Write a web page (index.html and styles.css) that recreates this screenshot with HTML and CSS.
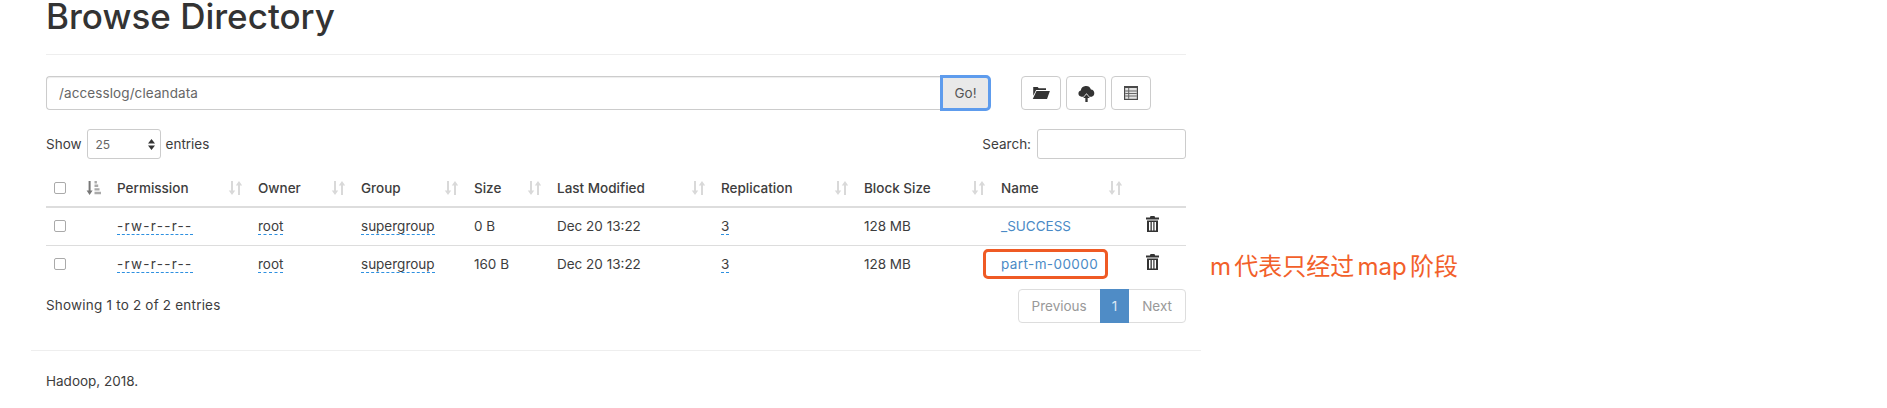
FILE: index.html
```html
<!DOCTYPE html>
<html lang="en">
<head>
  <meta charset="UTF-8">
  <title>Browsing HDFS</title>
  <link rel="stylesheet" href="styles.css">
</head>
<body>
<div class="page">
  <div class="container">
    <div class="page-header">
      <h1>Browse Directory</h1>
    </div>

    <div class="toolbar">
      <div class="path-group">
        <input type="text" class="path-input" value="/accesslog/cleandata">
        <button class="go-btn">Go!</button>
      </div>
      <div class="tool-btns">
        <button class="icon-btn">
          <svg width="20" height="18" viewBox="0 0 18 16"><path fill="#333" d="M2 2.500h4l1 1.200h6.500v1.600H4.600L2 10.500z"/><path fill="#333" d="M4.900 6.200H17l-2.600 7.300H1.600z"/></svg>
        </button>
        <button class="icon-btn">
          <svg width="19" height="19" viewBox="0 0 18 18"><path fill="#333" d="M4.200 12a3 3 0 0 1-.6-5.900 5 5 0 0 1 9.600-.9A3.500 3.500 0 0 1 14 12h-2.200L9 8.800 6.200 12z"/><path fill="#333" d="M9 9.800 5.900 13.200h2V17h2.200v-3.800h2z"/></svg>
        </button>
        <button class="icon-btn">
          <svg width="14" height="16" viewBox="0 0 14 16"><path fill="#4a4a4a" d="M0 1h14v14H0z"/><path fill="#e4e4e4" d="M1.200 3h11.600v10.800H1.200z"/><path fill="#666" d="M4.200 3h1v10.800h-1zM1.200 5.400h11.600v1H1.200zM1.200 8h11.600v1H1.200zM1.200 10.600h11.600v1H1.200z"/></svg>
        </button>
      </div>
    </div>

    <div class="table-top">
      <label class="len-label">Show
        <span class="len-select">
          <select><option>25</option></select>
          <svg class="len-arrows" width="7" height="11" viewBox="0 0 7 11"><path fill="#333" d="M3.500 0 7 4.400H0zM3.500 11 0 6.600h7z"/></svg>
        </span>
        entries</label>
      <label class="search-label">Search: <input type="search" class="search-input"></label>
    </div>

    <table class="files">
      <thead>
        <tr>
          <th class="col-check"><div class="th-in"><input type="checkbox"><svg class="sort-on" width="15" height="14" viewBox="0 0 15 14"><path fill="#777" d="M2.600 0h2v9.600h2L3.600 14 .6 9.600h2z"/><path fill="#aaa" d="M8.500 0h2.400v2.400H8.500zM8.500 3.600h3.700V6H8.500zM8.500 7.200h5V9.600h-5zM8.500 10.800h6.500V13.200H8.500z"/></svg></div></th>
          <th class="col-perm"><div class="th-in">Permission<svg class="sort" width="15" height="14" viewBox="0 0 15 14"><use href="#sort-both"/></svg></div></th>
          <th class="col-owner"><div class="th-in">Owner<svg class="sort" width="15" height="14" viewBox="0 0 15 14"><use href="#sort-both"/></svg></div></th>
          <th class="col-group"><div class="th-in">Group<svg class="sort" width="15" height="14" viewBox="0 0 15 14"><use href="#sort-both"/></svg></div></th>
          <th class="col-size"><div class="th-in">Size<svg class="sort" width="15" height="14" viewBox="0 0 15 14"><use href="#sort-both"/></svg></div></th>
          <th class="col-mod"><div class="th-in">Last Modified<svg class="sort" width="15" height="14" viewBox="0 0 15 14"><use href="#sort-both"/></svg></div></th>
          <th class="col-rep"><div class="th-in">Replication<svg class="sort" width="15" height="14" viewBox="0 0 15 14"><use href="#sort-both"/></svg></div></th>
          <th class="col-block"><div class="th-in">Block Size<svg class="sort" width="15" height="14" viewBox="0 0 15 14"><use href="#sort-both"/></svg></div></th>
          <th class="col-name"><div class="th-in">Name<svg class="sort" width="15" height="14" viewBox="0 0 15 14"><use href="#sort-both"/></svg></div></th>
          <th class="col-del"></th>
        </tr>
      </thead>
      <tbody>
        <tr>
          <td><input type="checkbox"></td>
          <td><span class="editable perm">-rw-r--r--</span></td>
          <td><span class="editable">root</span></td>
          <td><span class="editable">supergroup</span></td>
          <td>0 B</td>
          <td>Dec 20 13:22</td>
          <td><span class="editable">3</span></td>
          <td>128 MB</td>
          <td><a href="#">_SUCCESS</a></td>
          <td class="del"><svg width="15" height="16" viewBox="0 0 15 16"><use href="#trash"/></svg></td>
        </tr>
        <tr>
          <td><input type="checkbox"></td>
          <td><span class="editable perm">-rw-r--r--</span></td>
          <td><span class="editable">root</span></td>
          <td><span class="editable">supergroup</span></td>
          <td>160 B</td>
          <td>Dec 20 13:22</td>
          <td><span class="editable">3</span></td>
          <td>128 MB</td>
          <td><a href="#" class="part">part-m-00000</a></td>
          <td class="del"><svg width="15" height="16" viewBox="0 0 15 16"><use href="#trash"/></svg></td>
        </tr>
      </tbody>
    </table>

    <div class="table-bottom">
      <div class="info">Showing 1 to 2 of 2 entries</div>
      <div class="pager">
        <span class="pg">Previous</span>
        <span class="pg pg-on">1</span>
        <span class="pg">Next</span>
      </div>
    </div>

    <hr class="foot-line">
    <p class="footer">Hadoop, 2018.</p>
  </div>

  <div class="name-box"></div>
  <div class="note">m 代表只经过 map 阶段</div>

  <svg width="0" height="0" class="defs">
    <symbol id="sort-both" viewBox="0 0 15 14"><path fill="#d9d9d9" d="M3 0h2v9.600h2.200L4 14 .8 9.600H3z"/><path fill="#d9d9d9" d="M11 0l3.200 4.400H12V14h-2V4.400H7.800z"/></symbol>
    <symbol id="trash" viewBox="0 0 15 16"><path fill="#333" d="M5.500 0h4l.6 1.500H14V3.500H1V1.500h3.900z"/><path fill="#333" fill-rule="evenodd" d="M2 4.500h11V16H2zM4 6v8.500h1.500V6zM6.800 6v8.500h1.500V6zM9.500 6v8.500H11V6z"/></symbol>
  </svg>
</div>
</body>
</html>
```

FILE: styles.css
```css
body {
  margin: 0;
  font-family: Inter, "Liberation Sans", Arial, sans-serif;
  font-size: 13.5px;
  line-height: 20px;
  color: #3d3d3d;
  background: #fff;
}

.page { position: relative; height: 408px; overflow: hidden; }

.container { width: 1170px; margin-left: 31px; box-sizing: border-box; }

.page-header {
  margin: 0 15px 21px;
  padding-bottom: 21px;
  border-bottom: 1px solid #eee;
}
h1 {
  margin: 0;
  color: #333;
  font-size: 35px;
  font-weight: 500;
  line-height: 33px;
}

.toolbar { display: flex; margin: 0 15px; height: 34px; }

.path-group { display: flex; width: 944px; }
.path-input {
  width: 895px;
  height: 34px;
  box-sizing: border-box;
  padding: 6px 12px;
  border: 1px solid #ccc;
  border-right: none;
  border-radius: 4px 0 0 4px;
  box-shadow: inset 0 1px 1px rgba(0, 0, 0, .075);
  font: inherit;
  letter-spacing: .1px;
  color: #666;
}
.go-btn {
  width: 49px;
  height: 34px;
  border: 1px solid #adadad;
  border-radius: 0 4px 4px 0;
  background: #e9e9e9;
  font: inherit;
  color: #555;
  outline: 3px solid #5e9ced;
  outline-offset: -2px;
}

.tool-btns { display: flex; gap: 5px; margin-left: 31px; }
.icon-btn {
  width: 40px;
  height: 34px;
  padding: 0;
  display: flex;
  align-items: center;
  justify-content: center;
  border: 1px solid #ccc;
  border-radius: 4px;
  background: #fff;
}

.table-top {
  display: flex;
  justify-content: space-between;
  align-items: center;
  margin: 19px 15px 11px;
  height: 30px;
}
.len-label, .search-label { display: flex; align-items: center; gap: 5px; }
.len-select { position: relative; display: block; }
.len-select select {
  display: block;
  width: 74px;
  height: 30px;
  padding: 0 8px;
  border: 1px solid #ccc;
  border-radius: 3px;
  background: #fff;
  appearance: none;
  font: 12px Inter, "Liberation Sans", Arial, sans-serif;
  color: #666;
}
.len-arrows { position: absolute; right: 6px; top: 10px; }
.search-input {
  width: 149px;
  height: 30px;
  box-sizing: border-box;
  border: 1px solid #ccc;
  border-radius: 3px;
  margin-left: 1px;
}

.files {
  width: 1140px;
  margin: 0 15px;
  border-collapse: collapse;
  table-layout: fixed;
}
.files th {
  padding: 8px;
  text-align: left;
  font-weight: 500;
  border-bottom: 2px solid #ddd;
}
.files td {
  padding: 7px 8px 9px;
  border-top: 1px solid #ddd;
}
.files tbody tr:first-child td { border-top: none; }
.files td.del { padding-left: 15px; padding-top: 8px; padding-bottom: 8px; }

.col-check { width: 47px; }
.col-perm { width: 125px; }
.col-owner { width: 87px; }
.col-group { width: 97px; }
.col-size { width: 67px; }
.col-mod { width: 148px; }
.col-rep { width: 127px; }
.col-block { width: 121px; }
.col-name { width: 121px; }

.th-in { display: flex; justify-content: space-between; align-items: center; }
.sort { margin-right: -1px; }
.sort-on { margin-right: 0; }

input[type="checkbox"] {
  appearance: none;
  display: block;
  width: 12px;
  height: 12px;
  margin: 0;
  border: 1px solid #aaa;
  border-radius: 2px;
  background: #fff;
}

.files td a { color: #4a8ac6; text-decoration: none; }
.files td a.part { letter-spacing: .4px; }
.editable { border-bottom: 1px dashed #2e90e0; }
.perm { letter-spacing: 1.3px; }

.table-bottom {
  display: flex;
  justify-content: space-between;
  margin: 6px 15px 0;
}
.info { padding-top: 6px; letter-spacing: .2px; }
.pager {
  display: flex;
  height: 34px;
  border: 1px solid #ddd;
  border-radius: 4px;
  box-sizing: border-box;
}
.pg { padding: 6px 13px; color: #999; line-height: 20px; }
.pg-on { background: #4f8cc6; color: #dbe8f4; margin: -1px 0; padding: 7px 12px; }

.foot-line { margin: 27px 0 20px; border: 0; border-top: 1px solid #eee; }
.footer { margin: 0 15px; }

.name-box {
  position: absolute;
  left: 983px;
  top: 249px;
  width: 125px;
  height: 30px;
  box-sizing: border-box;
  border: 3px solid #ef5a24;
  border-radius: 5px;
}
.note {
  position: absolute;
  left: 1210px;
  top: 252px;
  font-family: Inter, "Noto Sans CJK SC", sans-serif;
  font-size: 24px;
  line-height: 30px;
  word-spacing: -3.5px;
  color: #f2602a;
}
.defs { position: absolute; }
```
